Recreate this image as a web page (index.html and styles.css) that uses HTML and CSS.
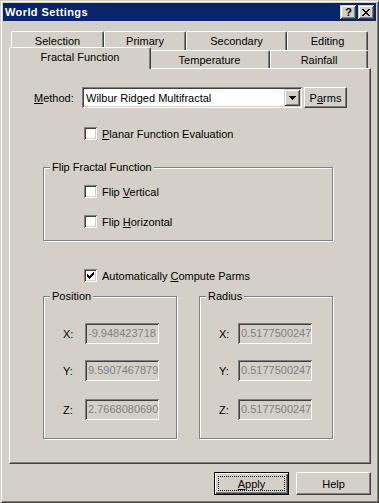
FILE: index.html
```html
<!DOCTYPE html>
<html>
<head>
<meta charset="utf-8">
<title>World Settings</title>
<link rel="stylesheet" href="styles.css">
</head>
<body>
<div class="window">
  <div class="titlebar">
    <span class="title">World Settings</span>
    <div class="caption-btns">
      <span class="cbtn help-glyph">?</span>
      <span class="cbtn">
        <svg width="8" height="7" viewBox="0 0 8 7" shape-rendering="crispEdges"><path d="M0 0h2v1h1v1h2v-1h1v-1h2v1h-1v1h-1v1h-1v1h1v1h1v1h1v1h-2v-1h-1v-1h-2v1h-1v1h-2v-1h1v-1h1v-1h1v-1h-1v-1h-1v-1h-1z" fill="#000"/></svg>
      </span>
    </div>
  </div>
  <div class="body">
    <div class="tabs">
      <div class="tabrow back">
        <div class="tab t-selection">Selection</div>
        <div class="tab t-primary">Primary</div>
        <div class="tab t-secondary">Secondary</div>
        <div class="tab t-editing">Editing</div>
      </div>
      <div class="tabrow front">
        <div class="tab active t-fractal">Fractal Function</div>
        <div class="tab t-temperature">Temperature</div>
        <div class="tab t-rainfall">Rainfall</div>
      </div>
    </div>
    <div class="panel">
      <div class="method-row">
        <label class="method-label"><u>M</u>ethod:</label>
        <div class="combo">
          <span class="combo-text">Wilbur Ridged Multifractal</span>
          <span class="combo-btn">
            <svg width="7" height="4" viewBox="0 0 7 4" shape-rendering="crispEdges"><path d="M0 0h7v1h-1v1h-1v1h-1v1h-1v-1h-1v-1h-1v-1h-1z" fill="#000"/></svg>
          </span>
        </div>
        <button class="btn parms">P<u>a</u>rms</button>
      </div>

      <div class="check-row planar">
        <span class="checkbox"></span>
        <span><u>P</u>lanar Function Evaluation</span>
      </div>

      <fieldset class="group flip">
        <legend>Flip Fractal Function</legend>
        <div class="check-row flip-v">
          <span class="checkbox"></span>
          <span>Flip <u>V</u>ertical</span>
        </div>
        <div class="check-row flip-h">
          <span class="checkbox"></span>
          <span>Flip <u>H</u>orizontal</span>
        </div>
      </fieldset>

      <div class="check-row auto">
        <span class="checkbox">
          <svg width="7" height="7" viewBox="0 0 7 7" shape-rendering="crispEdges"><path d="M0 2h1v3h-1zM1 3h1v3h-1zM2 4h1v3h-1zM3 3h1v3h-1zM4 2h1v3h-1zM5 1h1v3h-1zM6 0h1v3h-1z" fill="#000"/></svg>
        </span>
        <span>Automatically <u>C</u>ompute Parms</span>
      </div>

      <div class="groups">
        <fieldset class="group coords pos">
          <legend>Position</legend>
          <div class="field-row r1"><span class="flabel">X:</span><span class="field">-9.948423718</span></div>
          <div class="field-row r2"><span class="flabel">Y:</span><span class="field">9.5907467879</span></div>
          <div class="field-row r3"><span class="flabel">Z:</span><span class="field">2.7668080690</span></div>
        </fieldset>
        <fieldset class="group coords rad">
          <legend>Radius</legend>
          <div class="field-row r1"><span class="flabel">X:</span><span class="field">0.5177500247</span></div>
          <div class="field-row r2"><span class="flabel">Y:</span><span class="field">0.5177500247</span></div>
          <div class="field-row r3"><span class="flabel">Z:</span><span class="field">0.5177500247</span></div>
        </fieldset>
      </div>
    </div>
    <div class="footer">
      <button class="btn default"><u>A</u>pply</button>
      <button class="btn">Help</button>
    </div>
  </div>
</div>
</body>
</html>
```
FILE: styles.css
```css
* { box-sizing: border-box; }
html, body { margin: 0; padding: 0; }
body {
  background: #d4d0c8;
  font-family: "Liberation Sans", Arial, sans-serif;
  font-size: 11px;
  color: #000;
}
u { text-decoration: underline; text-underline-offset: 1px; }

.window {
  width: 379px;
  height: 503px;
  background: #d4d0c8;
  padding: 3px;
  display: flex;
  flex-direction: column;
  box-shadow: inset 1px 1px #d4d0c8, inset -1px -1px #404040, inset 2px 2px #fff, inset -2px -2px #808080;
}

/* title bar */
.titlebar {
  flex: none;
  height: 18px;
  background: #0a246a;
  color: #fff;
  display: flex;
  align-items: center;
  padding: 0 2px 0 2px;
}
.title { flex: 1; font-weight: bold; letter-spacing: 0.4px; }
.caption-btns { display: flex; gap: 2px; }
.cbtn {
  width: 16px;
  height: 14px;
  background: #d4d0c8;
  color: #000;
  display: flex;
  align-items: center;
  justify-content: center;
  box-shadow: inset 1px 1px #d4d0c8, inset -1px -1px #404040, inset 2px 2px #fff, inset -2px -2px #808080;
}
.help-glyph { font-weight: bold; font-size: 11px; line-height: 14px; padding-left: 1px; }

/* body */
.body {
  flex: 1;
  display: flex;
  flex-direction: column;
  padding: 10px 5px 0 6px;
}

/* tabs */
.tabs { padding-left: 2px; }
.tabrow { display: flex; align-items: flex-end; }
.tabrow.back { height: 19px; }
.tabrow.front { margin-top: -3px; height: 21px; }
.tab {
  height: 19px;
  display: flex;
  align-items: center;
  justify-content: center;
  border-top: 1px solid #fff;
  border-left: 1px solid #fff;
  border-right: 1px solid #404040;
  border-radius: 2px 2px 0 0;
  box-shadow: inset -1px 0 #808080;
  background: #d4d0c8;
  white-space: nowrap;
}
.tabrow.front .tab { height: 18px; }
.tabrow.front .tab.active {
  height: 22px;
  margin: 0 -2px -1px -2px;
  padding-bottom: 3px;
  position: relative;
  z-index: 1;
}
.t-selection { width: 93px; }
.t-primary { width: 82px; }
.t-secondary { width: 101px; }
.t-editing { width: 81px; }
.t-fractal { width: 142px; }
.t-temperature { width: 121px; }
.t-rainfall { width: 98px; }

/* panel */
.panel {
  flex: none;
  height: 396px;
  border: 1px solid;
  border-color: #fff #404040 #404040 #fff;
  box-shadow: inset -1px -1px #808080;
}

.method-row {
  display: flex;
  align-items: center;
  height: 21px;
  margin: 18px 0 0 24px;
}
.method-label { width: 48px; }
.combo {
  width: 220px;
  height: 21px;
  background: #fff;
  display: flex;
  align-items: center;
  padding: 2px;
  box-shadow: inset 1px 1px #808080, inset -1px -1px #fff, inset 2px 2px #404040, inset -2px -2px #d4d0c8;
}
.combo-text { flex: 1; padding-left: 2px; white-space: nowrap; overflow: hidden; }
.combo-btn {
  width: 16px;
  height: 17px;
  background: #d4d0c8;
  display: flex;
  align-items: center;
  justify-content: center;
  box-shadow: inset 1px 1px #d4d0c8, inset -1px -1px #404040, inset 2px 2px #fff, inset -2px -2px #808080;
}

.btn {
  font: inherit;
  color: #000;
  background: #d4d0c8;
  border: 1px solid;
  border-color: #fff #404040 #404040 #fff;
  box-shadow: inset -1px -1px #808080;
  padding: 0;
  margin: 0;
  height: 23px;
  width: 75px;
}
.parms { width: 43px; height: 21px; margin-left: 2px; }
.btn.default {
  border: 1px solid #000;
  box-shadow: inset 1px 1px #fff, inset -1px -1px #404040, inset -2px -2px #808080;
  outline: 1px dotted #000;
  outline-offset: -5px;
}

/* checkboxes */
.check-row {
  display: flex;
  align-items: center;
  gap: 5px;
  height: 13px;
  margin-left: 74px;
  white-space: nowrap;
}
.checkbox {
  flex: none;
  width: 13px;
  height: 13px;
  background: #fff;
  display: flex;
  align-items: center;
  justify-content: center;
  box-shadow: inset 1px 1px #808080, inset -1px -1px #fff, inset 2px 2px #404040, inset -2px -2px #d4d0c8;
}
.planar { margin-top: 19px; }

/* group boxes */
.group {
  margin: 0;
  padding: 0;
  min-width: 0;
  border: 1px solid #808080;
  box-shadow: inset 1px 1px #fff, 1px 1px #fff;
}
.group legend {
  padding: 0 2px;
  margin-left: 6px;
  line-height: 13px;
  background: #d4d0c8;
}
.flip { width: 290px; margin: 21px 0 0 33px; padding-bottom: 12px; }
.flip .check-row { margin-left: 40px; }
.flip-v { margin-top: 11px; }
.flip-h { margin-top: 17px; }

.auto { margin-top: 28px; }

.groups {
  display: flex;
  gap: 22px;
  margin: 8px 0 0 33px;
}
.coords { width: 134px; padding-bottom: 18px; }
.field-row { display: flex; align-items: center; height: 21px; }
.r1 { margin-top: 20px; }
.r2 { margin-top: 16px; }
.r3 { margin-top: 18px; }
.flabel { flex: none; margin-left: 19px; }
.pos .flabel { width: 22px; }
.rad .flabel { width: 19px; }
.field {
  flex: none;
  width: 74px;
  height: 21px;
  line-height: 17px;
  padding: 2px 2px 2px 3px;
  color: #808080;
  background: #d4d0c8;
  white-space: nowrap;
  overflow: hidden;
  box-shadow: inset 1px 1px #808080, inset -1px -1px #fff, inset 2px 2px #404040, inset -2px -2px #d4d0c8;
}

/* footer */
.footer {
  display: flex;
  justify-content: flex-end;
  gap: 7px;
  margin-top: 8px;
}
```
